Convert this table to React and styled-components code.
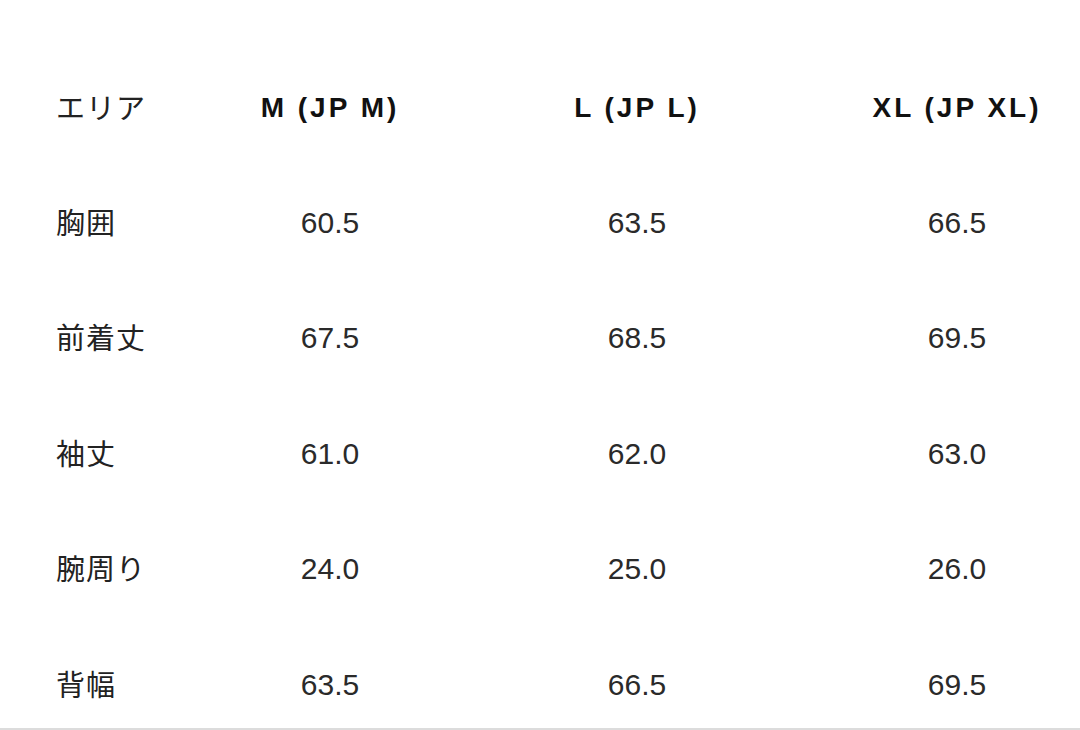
import React from "react";
import styled, { createGlobalStyle } from "styled-components";

const Global = createGlobalStyle`
  html, body { margin: 0; padding: 0; background: #fff; }
  body { font-family: "Liberation Sans", "Noto Sans CJK JP", sans-serif; }
`;

const Table = styled.div`
  width: 1080px;
  padding-top: 36px;
  border-bottom: 2px solid #dcdcdc;
`;

const Row = styled.div`
  display: grid;
  grid-template-columns: 220px 220px 394px 246px;
  align-items: start;
  box-sizing: border-box;
  height: ${(p) => (p.$header ? "114px" : "115.5px")};
  padding-top: ${(p) => (p.$header ? "57px" : "57.5px")};
`;

const Label = styled.div`
  padding-left: 56px;
  font-family: "Noto Sans CJK JP", sans-serif;
  font-size: 29px;
  line-height: 27px;
  color: #222;
  letter-spacing: 1px;
`;

const HeadCell = styled.div`
  text-align: center;
  font-family: "Liberation Sans", Arial, sans-serif;
  font-weight: 700;
  font-size: 28px;
  letter-spacing: 3px;
  line-height: 30px;
  color: #111;
  white-space: nowrap;
`;

const Value = styled.div`
  text-align: center;
  font-family: "Liberation Sans", Arial, sans-serif;
  font-size: 30px;
  line-height: 30px;
  color: #2a2a2a;
`;

const sizes = ["M (JP M)", "L (JP L)", "XL (JP XL)"];
const rows = [
  ["胸囲", "60.5", "63.5", "66.5"],
  ["前着丈", "67.5", "68.5", "69.5"],
  ["袖丈", "61.0", "62.0", "63.0"],
  ["腕周り", "24.0", "25.0", "26.0"],
  ["背幅", "63.5", "66.5", "69.5"],
];

export default function App() {
  return (
    <>
      <Global />
      <Table>
        <Row $header>
          <Label>エリア</Label>
          {sizes.map((s) => (
            <HeadCell key={s}>{s}</HeadCell>
          ))}
        </Row>
        {rows.map(([label, ...vals]) => (
          <Row key={label}>
            <Label>{label}</Label>
            {vals.map((v, i) => (
              <Value key={i}>{v}</Value>
            ))}
          </Row>
        ))}
      </Table>
    </>
  );
}
